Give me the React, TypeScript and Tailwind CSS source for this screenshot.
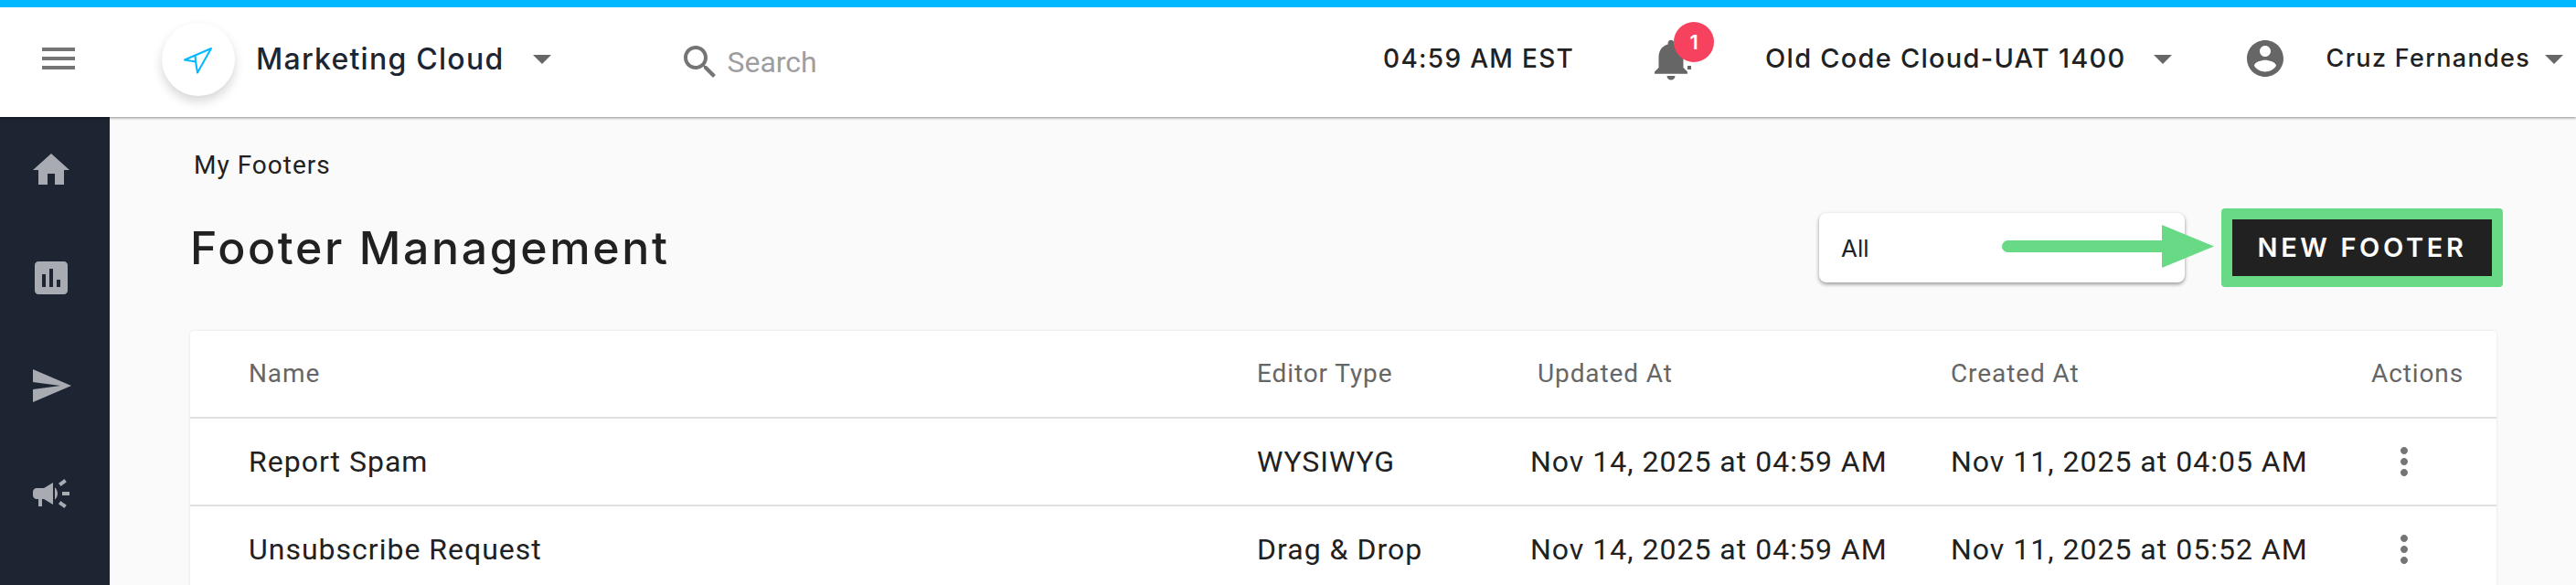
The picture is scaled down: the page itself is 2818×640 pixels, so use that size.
const montserrat = "font-['Inter',sans-serif]";
const roboto = "font-['Roboto',sans-serif]";

const Caret = ({ className }: { className: string }) => (
  <div
    className={`h-0 w-0 border-x-[10px] border-t-[10px] border-x-transparent border-t-[#666666] ${className}`}
  />
);

const Icon = ({ d, className }: { d: string; className: string }) => (
  <svg viewBox="0 0 24 24" className={`h-12 w-12 shrink-0 fill-current ${className}`}>
    <path d={d} />
  </svg>
);

const sideIcons = [
  'M10 20v-6h4v6h5v-8h3L12 3 2 12h3v8z',
  'M19 3H5c-1.1 0-2 .9-2 2v14c0 1.1.9 2 2 2h14c1.1 0 2-.9 2-2V5c0-1.1-.9-2-2-2zM9 17H7v-7h2v7zm4 0h-2V7h2v10zm4 0h-2v-4h2v4z',
  'M2.01 21L23 12 2.01 3 2 10l15 2-15 2z',
  'M18 11v2h4v-2h-4zm-2 6.61c.96.71 2.21 1.65 3.2 2.39.4-.53.8-1.07 1.2-1.6-.99-.74-2.24-1.68-3.2-2.4-.4.54-.8 1.08-1.2 1.61zM20.4 5.6c-.4-.53-.8-1.07-1.2-1.6-.99.74-2.24 1.68-3.2 2.4.4.53.8 1.07 1.2 1.6.96-.72 2.21-1.65 3.2-2.4zM4 9c-1.1 0-2 .9-2 2v2c0 1.1.9 2 2 2h1v4h2v-4h1l5 3V6L8 9H4zm11.5 3c0-1.33-.58-2.53-1.5-3.35v6.69c.92-.81 1.5-2.01 1.5-3.34z'
];

const rows = [
  {
    name: 'Report Spam',
    editor: 'WYSIWYG',
    updated: 'Nov 14, 2025 at 04:59 AM',
    created: 'Nov 11, 2025 at 04:05 AM'
  },
  {
    name: 'Unsubscribe Request',
    editor: 'Drag & Drop',
    updated: 'Nov 14, 2025 at 04:59 AM',
    created: 'Nov 11, 2025 at 05:52 AM'
  }
];

const Header = () => (
  <div className="relative z-10 h-[128px] w-full border-t-8 border-[#00b8ff] bg-white shadow-[0_1px_3px_rgba(0,0,0,0.45)]">
    <div className="flex h-[120px] items-center pb-[6px]">
      <Icon
        d="M3 18h18v-2H3v2zm0-5h18v-2H3v2zm0-7v2h18V6H3z"
        className="mb-[2px] ml-10 text-[#757575]"
      />
      <div className="ml-[89px] flex h-20 w-20 shrink-0 items-center justify-center rounded-full bg-white shadow-[0_6px_12px_rgba(0,0,0,0.16)]">
        <svg viewBox="0 0 32 32" className="h-8 w-8 fill-none stroke-[#00b8ff] stroke-[2]">
          <path d="M30 4 L1 16.5 L13 18.5 L15 30.5 Z M12.5 11 L13 18.5" strokeLinejoin="round" />
        </svg>
      </div>
      <div className={`${montserrat} ml-[23px] text-[32px] font-medium tracking-[1.25px] text-[#1c2533]`}>
        Marketing Cloud
      </div>
      <Caret className="ml-8" />
      <Icon
        d="M15.5 14h-.79l-.28-.27C15.41 12.59 16 11.11 16 9.5 16 5.91 13.09 3 9.5 3S3 5.91 3 9.5 5.91 16 9.5 16c1.61 0 3.09-.59 4.23-1.57l.27.28v.79l5 4.99L20.49 19l-4.99-5zm-6 0C7.01 14 5 11.99 5 9.5S7.01 5 9.5 5 14 7.01 14 9.5 11.99 14 9.5 14z"
        className="ml-[139px] mt-[6px] text-[#757575]"
      />
      <div className={`${roboto} ml-[5px] mt-[5px] text-[32px] text-[#9e9e9e]`}>Search</div>

      <div className={`${montserrat} mb-[2px] ml-auto text-[28px] font-medium tracking-[1.3px] text-[#212121]`}>
        04:59 AM EST
      </div>
      <div className="relative ml-[79px] h-[54px] w-[54px] shrink-0">
        <svg viewBox="0 0 24 24" className="h-[54px] w-[54px] fill-[#666666]">
          <path d="M12 22c1.1 0 2-.9 2-2h-4c0 1.1.89 2 2 2zm6-6v-5c0-3.07-1.64-5.64-4.5-6.32V4c0-.83-.67-1.5-1.5-1.5s-1.5.67-1.5 1.5v.68C7.63 5.36 6 7.92 6 11v5l-2 2v1h16v-1l-2-2z" />
        </svg>
        <div className="absolute left-[45px] top-[34px] h-1 w-1 bg-[#666666]" />
        <div className={`${montserrat} absolute left-[30px] top-[-14px] flex h-11 w-11 items-center justify-center rounded-full bg-[#f6425f] text-[22px] font-semibold text-white`}>
          1
        </div>
      </div>
      <div className={`${montserrat} mb-[2px] ml-[76px] text-[29px] font-medium tracking-[1.25px] text-[#212121]`}>
        Old Code Cloud-UAT 1400
      </div>
      <Caret className="ml-[30px]" />
      <Icon
        d="M12 2C6.48 2 2 6.48 2 12s4.48 10 10 10 10-4.48 10-10S17.52 2 12 2zm0 3c1.66 0 3 1.34 3 3s-1.34 3-3 3-3-1.34-3-3 1.34-3 3-3zm0 14.2c-2.5 0-4.71-1.28-6-3.22.03-1.99 4-3.08 6-3.08 1.99 0 5.97 1.09 6 3.08-1.29 1.94-3.5 3.22-6 3.22z"
        className="mb-[2px] ml-[78px] text-[#666666]"
      />
      <div className={`${montserrat} mb-[2px] ml-[43px] text-[27px] font-medium tracking-[1.3px] text-[#212121]`}>
        Cruz Fernandes
      </div>
      <Caret className="ml-4 mr-[14px]" />
    </div>
  </div>
);

const Sidebar = () => (
  <div className="flex w-[120px] shrink-0 flex-col gap-[70px] bg-[#1d2432] pl-8 pt-[34px]">
    {sideIcons.map((d) => (
      <Icon key={d} d={d} className="text-[#a9abb2]" />
    ))}
  </div>
);

const rowClass = 'grid grid-cols-[1167px_299px_460px_460px_1fr] items-center';

const App = () => {
  return (
    <div className="flex h-[640px] w-[2818px] flex-col overflow-hidden bg-[#fafafa]">
      <Header />
      <div className="flex min-h-0 flex-1">
        <Sidebar />
        <div className="relative min-w-0 flex-1 pl-[88px] pr-[87px]">
          <div className={`${roboto} mt-[37px] pl-[4px] text-[28px] leading-[32px] tracking-[1px] text-[#212121]`}>
            My Footers
          </div>
          <div className="mt-[31px] flex h-[86px] items-center">
            <div className={`${montserrat} text-[50px] font-medium tracking-[2.6px] text-[#212121]`}>
              Footer Management
            </div>
            <div className={`${montserrat} ml-auto flex h-[76px] w-[400px] items-center justify-between rounded-lg bg-white pl-6 pr-[43px] text-[26px] text-[#212121] shadow-[0_2px_4px_rgba(0,0,0,0.4)]`}>
              All
              <div className="h-0 w-0 border-x-[5px] border-t-[6px] border-x-transparent border-t-[#666666]" />
            </div>
            <div className="ml-10 mr-[-7px] rounded-[4px] bg-[#68d984] p-3">
              <div className={`${montserrat} flex h-[62px] w-[284px] items-center justify-center bg-[#212121] text-[29px] font-semibold tracking-[3.6px] text-white`}>
                NEW FOOTER
              </div>
            </div>
          </div>
          {/* green arrow drawn over the select */}
          <svg viewBox="0 0 232 47" className="absolute left-[2070px] top-[118px] h-[47px] w-[232px] fill-[#68d984]">
            <path d="M6.5 17H175V0l57 23.5L175 47V30H6.5a6.5 6.5 0 0 1 0-13z" />
          </svg>

          <div className="mt-[48px] rounded-t bg-white shadow-[0_0_3px_rgba(0,0,0,0.1)]">
            <div className={`${rowClass} ${roboto} h-[96px] border-b-2 border-[#e0e0e0] text-[28px] tracking-[0.9px] text-[#666666]`}>
              <div className="pl-16">Name</div>
              <div>Editor Type</div>
              <div className="pl-2">Updated At</div>
              <div>Created At</div>
              <div>Actions</div>
            </div>
            {rows.map((row) => (
              <div
                key={row.name}
                className={`${rowClass} ${roboto} h-[96px] border-b-2 border-[#e0e0e0] text-[32px] tracking-[1px] text-[#212121]`}
              >
                <div className="pl-16">{row.name}</div>
                <div>{row.editor}</div>
                <div>{row.updated}</div>
                <div>{row.created}</div>
                <div className="pl-3">
                  <Icon
                    d="M12 8c1.1 0 2-.9 2-2s-.9-2-2-2-2 .9-2 2 .9 2 2 2zm0 2c-1.1 0-2 .9-2 2s.9 2 2 2 2-.9 2-2-.9-2-2-2zm0 6c-1.1 0-2 .9-2 2s.9 2 2 2 2-.9 2-2-.9-2-2-2z"
                    className="text-[#757575]"
                  />
                </div>
              </div>
            ))}
          </div>
        </div>
      </div>
    </div>
  );
};

export default App;
